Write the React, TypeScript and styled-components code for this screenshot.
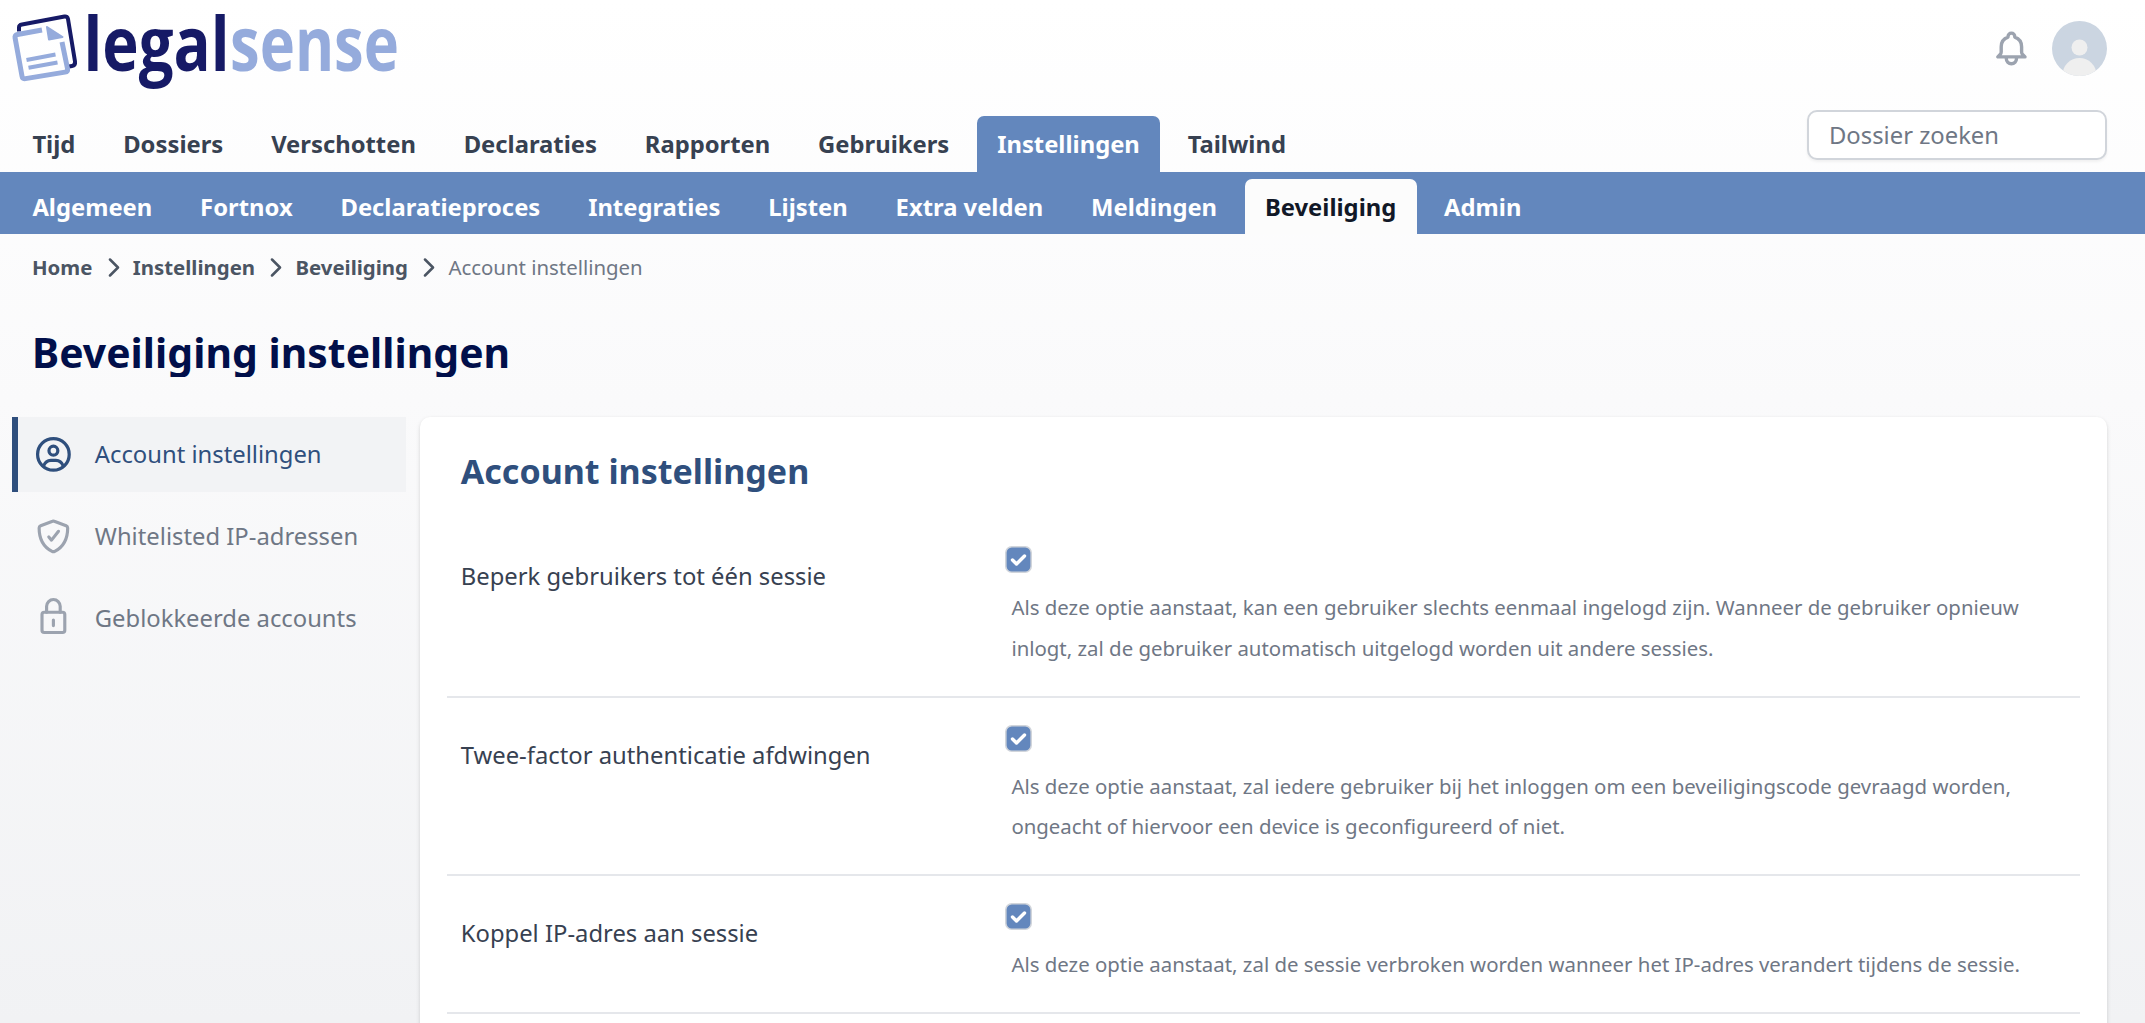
import React from "react";
import styled, { createGlobalStyle, css } from "styled-components";

const GlobalStyle = createGlobalStyle`
  * { box-sizing: border-box; }
  html, body, #root { margin: 0; height: 1023px; }
  body { overflow: hidden; font-family: "Noto Sans", "Open Sans", sans-serif; color: #374151; }
`;

const Page = styled.div`
  display: flex;
  flex-direction: column;
  height: 1023px;
  overflow: hidden;
  background: linear-gradient(#ffffff 0, #fafafb 400px, #f1f2f4 1023px);
  & > * { flex-shrink: 0; }
`;

const Header = styled.header`
  display: flex;
  justify-content: space-between;
  height: 109px;
  padding: 0 38px 0 12px;
`;

const Logo = styled.svg`
  width: 400px;
  height: 96px;
  font-family: "Open Sans", sans-serif;
  font-size: 75px;
  font-weight: 700;
`;

const UserTools = styled.div`
  display: flex;
  align-items: center;
  gap: 20px;
  height: 96px;
`;

const NavArea = styled.div`
  display: flex;
  justify-content: space-between;
  align-items: flex-start;
  height: 63px;
  padding: 0 38px 0 12px;
`;

const TabList = styled.nav<{ $top: number }>`
  display: flex;
  gap: 7.05px;
  padding-top: ${(p) => p.$top}px;
`;

const Tab = styled.a<{ $tone: "light" | "dark"; $active?: boolean }>`
  padding: 0 20.4px;
  border-radius: 7px 7px 0 0;
  font-size: 23.8px;
  font-weight: 700;
  white-space: nowrap;
  ${(p) =>
    p.$tone === "light"
      ? css`
          height: 57px;
          line-height: 56px;
          color: ${p.$active ? "#fff" : "#374151"};
          background: ${p.$active ? "#6387bd" : "transparent"};
        `
      : css`
          height: 55px;
          line-height: 56px;
          color: ${p.$active ? "#111827" : "#fff"};
          background: ${p.$active ? "#fcfcfc" : "transparent"};
        `}
`;

const Search = styled.input`
  width: 300px;
  height: 50px;
  margin-top: 1px;
  padding: 0 20px;
  border: 2px solid #d1d5db;
  border-radius: 10px;
  background: #fff;
  box-shadow: 0 2px 3px rgba(0, 0, 0, 0.05);
  font: 400 23.8px "Noto Sans", sans-serif;
  &::placeholder { color: #6f7785; opacity: 1; }
`;

const SubBar = styled.div`
  height: 62px;
  padding: 0 12px;
  background: #6387bd;
`;

const Crumbs = styled.nav`
  display: flex;
  align-items: center;
  height: 66px;
  padding-left: 32px;
  font-size: 20.4px;
  font-weight: 700;
  color: #4b5563;
`;

const CrumbArrow = styled.svg`
  width: 12px;
  height: 19px;
  margin: 0 13px 0 15.4px;
`;

const Current = styled.span`
  font-weight: 400;
  color: #6f7785;
`;

const Title = styled.h1`
  height: 45px;
  margin: 32px 0 40px 32px;
  overflow: hidden;
  font-size: 40.8px;
  line-height: 41px;
  letter-spacing: 0.06px;
  font-weight: 700;
  color: #010f4a;
`;

const Body = styled.main`
  display: flex;
  gap: 14px;
  padding: 0 38px 0 12px;
`;

const Side = styled.aside`
  display: flex;
  flex-direction: column;
  gap: 6.8px;
  width: 394px;
`;

const SideItem = styled.a<{ $active?: boolean }>`
  display: flex;
  align-items: center;
  gap: 20.8px;
  height: 74.8px;
  padding-left: 15.2px;
  border-left: 6.8px solid ${(p) => (p.$active ? "#2f4f7d" : "transparent")};
  background: ${(p) => (p.$active ? "#f2f3f5" : "transparent")};
  color: ${(p) => (p.$active ? "#2f4f7d" : "#6f7785")};
  font-size: 23.8px;
  font-weight: 400;
  svg {
    width: 40.8px;
    height: 40.8px;
    color: ${(p) => (p.$active ? "#2f4f7d" : "#9ca3af")};
  }
`;

const Card = styled.section`
  width: 1687px;
  height: 640px;
  padding: 34px 27.2px 0;
  border-radius: 10px;
  background: #fff;
  box-shadow: 0 2px 5px rgba(0, 0, 0, 0.1), 0 1px 3px rgba(0, 0, 0, 0.06);
`;

const CardTitle = styled.h2`
  margin: 0 0 28px 13.6px;
  font-size: 34px;
  line-height: 40px;
  font-weight: 700;
  color: #2f4f7d;
`;

const Row = styled.div<{ $lines: number }>`
  display: flex;
  height: ${(p) => (p.$lines === 2 ? 178.5 : 137.7)}px;
  padding: 26px 0 0 13.6px;
  border-bottom: 2px solid #e5e7eb;
`;

const Label = styled.div`
  width: 544px;
  padding-top: 14px;
  font-size: 23.8px;
  line-height: 34px;
  font-weight: 400;
  color: #374151;
`;

const Check = styled.svg`
  display: block;
  width: 27px;
  height: 27px;
`;

const Setting = styled.div`
  padding-top: 1px;
`;

const Help = styled.p`
  margin: 14px 0 0 6.6px;
  font-size: 20.4px;
  line-height: 40.8px;
  color: #6f7785;
  white-space: pre-line;
`;

const mainTabs = ["Tijd", "Dossiers", "Verschotten", "Declaraties", "Rapporten", "Gebruikers", "Instellingen", "Tailwind"];
const subTabs = ["Algemeen", "Fortnox", "Declaratieproces", "Integraties", "Lijsten", "Extra velden", "Meldingen", "Beveiliging", "Admin"];
const crumbs = ["Home", "Instellingen", "Beveiliging"];

const stroke = { fill: "none", stroke: "currentColor", strokeLinecap: "round", strokeLinejoin: "round" } as const;

const UserIcon = () => (
  <svg viewBox="0 0 24 24" {...stroke} strokeWidth="1.9">
    <circle cx="12" cy="12" r="9.3" />
    <circle cx="12" cy="9.8" r="2.6" />
    <path d="M6.200 18.800c.9-2.300 2.300-3.300 4.300-3.300h3c2 0 3.400 1 4.300 3.300" />
  </svg>
);
const ShieldIcon = () => (
  <svg viewBox="0 0 24 24" {...stroke} strokeWidth="1.850">
    <path d="M11.500 3.100q.5-.2 1 0l7 2.600q.9.400.9 1.300c0 6.300-2.800 11.300-7.600 13.800q-.8.400-1.600 0C6.400 18.300 3.600 13.300 3.600 7q0-.9.900-1.300z" />
    <path d="M9.300 12.300l1.600 1.900 4.100-5.200" />
  </svg>
);
const LockIcon = () => (
  <svg viewBox="0 0 24 24" {...stroke} strokeWidth="1.850">
    <rect x="5.300" y="9" width="13.400" height="11.900" rx="1.300" />
    <path d="M8 9V5.500a4 4 0 018 0V9M12 13.600v3.200" />
  </svg>
);

const sideItems = [
  { label: "Account instellingen", Icon: UserIcon },
  { label: "Whitelisted IP-adressen", Icon: ShieldIcon },
  { label: "Geblokkeerde accounts", Icon: LockIcon },
];

const settings = [
  {
    label: "Beperk gebruikers tot één sessie",
    help: "Als deze optie aanstaat, kan een gebruiker slechts eenmaal ingelogd zijn. Wanneer de gebruiker opnieuw\ninlogt, zal de gebruiker automatisch uitgelogd worden uit andere sessies.",
  },
  {
    label: "Twee-factor authenticatie afdwingen",
    help: "Als deze optie aanstaat, zal iedere gebruiker bij het inloggen om een beveiligingscode gevraagd worden,\nongeacht of hiervoor een device is geconfigureerd of niet.",
  },
  {
    label: "Koppel IP-adres aan sessie",
    help: "Als deze optie aanstaat, zal de sessie verbroken worden wanneer het IP-adres verandert tijdens de sessie.",
  },
];

export default function App() {
  return (
    <Page>
      <GlobalStyle />
      <Header>
        <Logo viewBox="12 0 400 96">
          <path d="M19 31.500v-4q0-2.500 3-3L64.500 16.500q3-.5 3.500 2.500L75 61.500q.5 4-3 4.500l-3 .5" fill="none" stroke="#161a66" strokeWidth="4" />
          <path d="M42 30L17.500 34.500q-3 .6-2.400 3.600l6.900 38q.5 3 3.500 2.500l39.500-6.500q3-.5 2.500-3.500L62 42" fill="none" stroke="#95abdc" strokeWidth="5" />
          <path d="M47 27l15.500 10-13.500 2.500z" fill="#95abdc" stroke="#95abdc" strokeWidth="2" strokeLinejoin="round" />
          <path d="M26.500 60l29-5.500M28.500 67.700l29-5.200" stroke="#95abdc" strokeWidth="4" />
          <text x="83.500" y="70.500" textLength="146" lengthAdjust="spacingAndGlyphs" fill="#161a66">legal</text>
          <text x="230" y="70.500" textLength="169" lengthAdjust="spacingAndGlyphs" fill="#95abdc">sense</text>
        </Logo>
        <UserTools>
          <svg width="40.800" height="40.800" viewBox="0 0 24 24" {...stroke} color="#9ca3af" strokeWidth="2">
            <path d="M15 17h5l-1.405-1.405A2.032 2.032 0 0118 14.158V11a6.002 6.002 0 00-4-5.659V5a2 2 0 10-4 0v.341C7.670 6.165 6 8.388 6 11v3.159c0 .538-.214 1.055-.595 1.436L4 17h5m6 0v1a3 3 0 11-6 0v-1m6 0H9" />
          </svg>
          <svg width="55" height="55" viewBox="0 0 55 55">
            <clipPath id="avatar"><circle cx="27.500" cy="27.500" r="27.500" /></clipPath>
            <g clipPath="url(#avatar)">
              <rect width="55" height="55" fill="#cbd5e1" />
              <circle cx="27.500" cy="26.500" r="8" fill="#efefef" />
              <circle cx="27.500" cy="54" r="17" fill="#efefef" />
            </g>
          </svg>
        </UserTools>
      </Header>
      <NavArea>
        <TabList $top={7}>
          {mainTabs.map((t) => (
            <Tab key={t} $tone="light" $active={t === "Instellingen"}>{t}</Tab>
          ))}
        </TabList>
        <Search placeholder="Dossier zoeken" />
      </NavArea>
      <SubBar>
        <TabList $top={7}>
          {subTabs.map((t) => (
            <Tab key={t} $tone="dark" $active={t === "Beveiliging"}>{t}</Tab>
          ))}
        </TabList>
      </SubBar>
      <Crumbs>
        {crumbs.map((c) => (
          <React.Fragment key={c}>
            {c}
            <CrumbArrow viewBox="0 0 12 19" {...stroke} strokeWidth="2.500">
              <path d="M2 1.500l8 8-8 8" />
            </CrumbArrow>
          </React.Fragment>
        ))}
        <Current>Account instellingen</Current>
      </Crumbs>
      <Title>Beveiliging instellingen</Title>
      <Body>
        <Side>
          {sideItems.map(({ label, Icon }, i) => (
            <SideItem key={label} $active={i === 0}>
              <Icon />
              {label}
            </SideItem>
          ))}
        </Side>
        <Card>
          <CardTitle>Account instellingen</CardTitle>
          {settings.map((s, i) => (
            <Row key={s.label} $lines={i === 2 ? 1 : 2}>
              <Label>{s.label}</Label>
              <Setting>
                <Check viewBox="0 0 27 27">
                  <rect x=".8" y=".8" width="25.400" height="25.400" rx="6" fill="#6387bd" stroke="#d1d5db" strokeWidth="1.600" />
                  <path d="M7.500 14l4 4 8-8" fill="none" stroke="#fff" strokeWidth="3.400" strokeLinecap="round" strokeLinejoin="round" />
                </Check>
                <Help>{s.help}</Help>
              </Setting>
            </Row>
          ))}
        </Card>
      </Body>
    </Page>
  );
}
